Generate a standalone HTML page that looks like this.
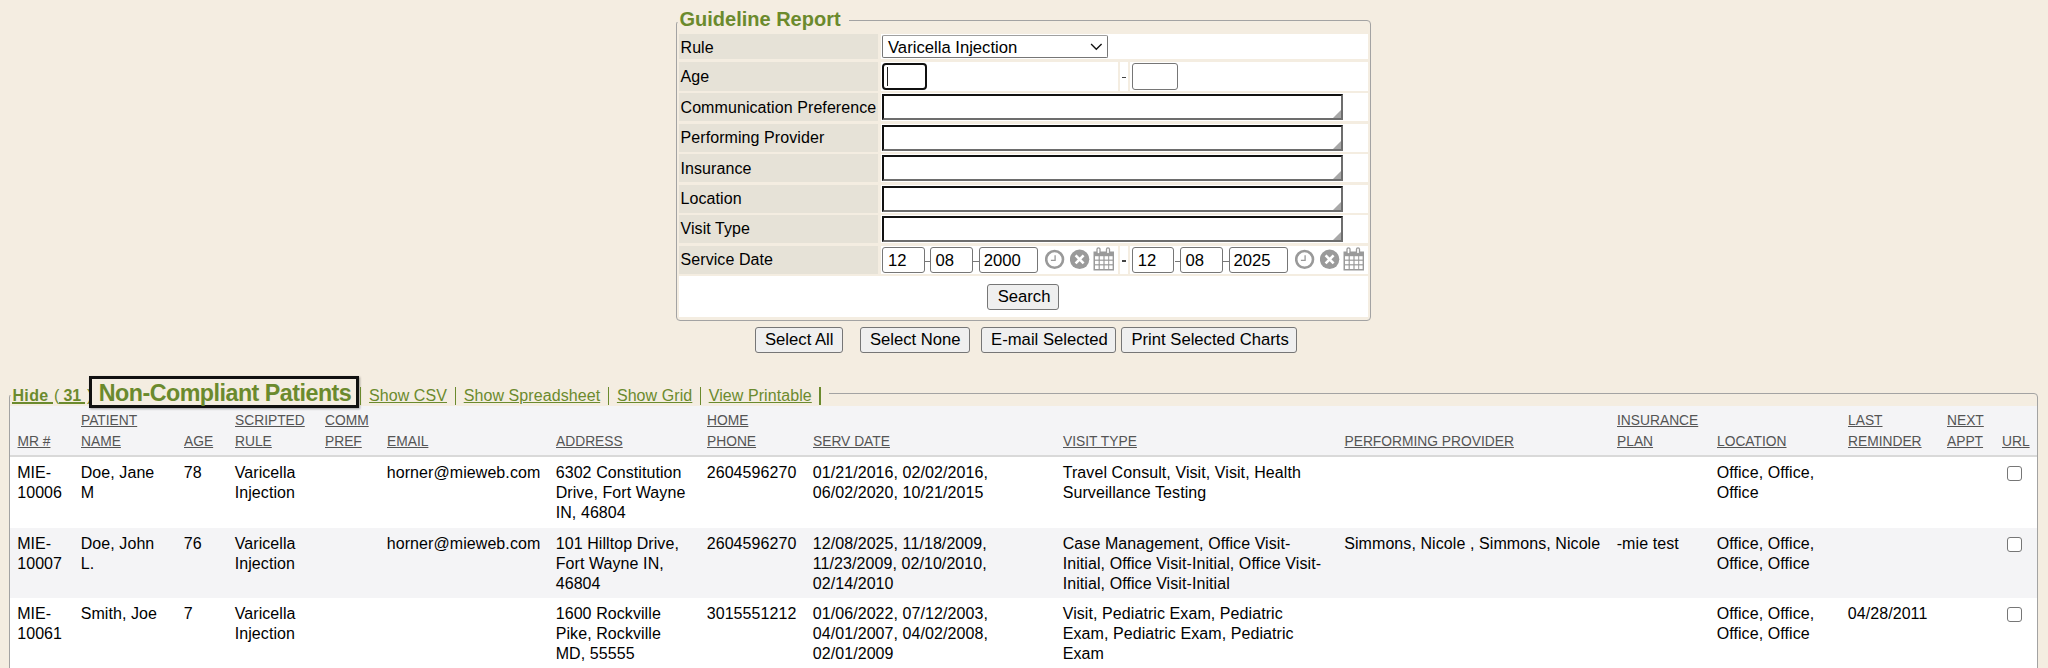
<!DOCTYPE html>
<html><head><meta charset="utf-8"><style>
html,body{margin:0;padding:0;}
body{width:2048px;height:668px;overflow:hidden;background:#f4ede1;position:relative;font-family:"Liberation Sans",sans-serif;}
.t{position:absolute;white-space:pre;font-family:"Liberation Sans",sans-serif;}
.u{text-decoration:underline;}
.r{position:absolute;}
.sel{border:1.3px solid #767676;border-top:1.6px solid #a0a0a0;border-radius:2px;background:#fff;box-sizing:border-box;}
.inp{border:1.3px solid #767676;border-radius:3px;background:#fff;box-sizing:border-box;}
.ta{border-style:solid;border-width:2.5px 2.5px 2.5px 2.5px;border-color:#111 #6d6d6d #6d6d6d #111;background:#fff;box-sizing:border-box;}
.btn{border:1.3px solid #767676;border-radius:3px;background:#efefef;box-sizing:border-box;}
.cb{width:14.6px;height:14.9px;border:1.4px solid #767676;border-radius:3px;background:#fff;box-sizing:border-box;}
</style></head><body>
<div class="r" style="left:676px;top:20px;width:695px;height:301px;border:1px solid #a3a3a3;border-radius:4px;box-sizing:border-box;"></div>
<div class="r" style="left:674px;top:15px;width:175px;height:7px;background:#f4ede1;"></div>
<div class="t " style="left:679.5px;top:7.300000000000001px;font-size:20px;line-height:24px;font-weight:bold;color:#6b8a2d;">Guideline Report</div>
<div class="r" style="left:679px;top:34px;width:199px;height:24.5px;background:#e6e2d7;"></div>
<div class="t " style="left:680.5px;top:37.7px;font-size:16px;line-height:20px;letter-spacing:0.08px;color:#000;">Rule</div>
<div class="r" style="left:679px;top:61.5px;width:199px;height:29px;background:#e6e2d7;"></div>
<div class="t " style="left:680.5px;top:66.7px;font-size:16px;line-height:20px;letter-spacing:0.08px;color:#000;">Age</div>
<div class="r" style="left:679px;top:93.3px;width:199px;height:28px;background:#e6e2d7;"></div>
<div class="t " style="left:680.5px;top:97.7px;font-size:16px;line-height:20px;letter-spacing:0.08px;color:#000;">Communication Preference</div>
<div class="r" style="left:679px;top:123.8px;width:199px;height:28px;background:#e6e2d7;"></div>
<div class="t " style="left:680.5px;top:128.2px;font-size:16px;line-height:20px;letter-spacing:0.08px;color:#000;">Performing Provider</div>
<div class="r" style="left:679px;top:154.3px;width:199px;height:28px;background:#e6e2d7;"></div>
<div class="t " style="left:680.5px;top:158.7px;font-size:16px;line-height:20px;letter-spacing:0.08px;color:#000;">Insurance</div>
<div class="r" style="left:679px;top:184.7px;width:199px;height:28.4px;background:#e6e2d7;"></div>
<div class="t " style="left:680.5px;top:189.0px;font-size:16px;line-height:20px;letter-spacing:0.08px;color:#000;">Location</div>
<div class="r" style="left:679px;top:215.3px;width:199px;height:27.9px;background:#e6e2d7;"></div>
<div class="t " style="left:680.5px;top:219.39999999999998px;font-size:16px;line-height:20px;letter-spacing:0.08px;color:#000;">Visit Type</div>
<div class="r" style="left:679px;top:245.8px;width:199px;height:28.2px;background:#e6e2d7;"></div>
<div class="t " style="left:680.5px;top:250.0px;font-size:16px;line-height:20px;letter-spacing:0.08px;color:#000;">Service Date</div>
<div class="r" style="left:880.5px;top:34px;width:487.5px;height:24.5px;background:#fff;"></div>
<div class="r" style="left:880.5px;top:61.5px;width:237.7px;height:29.2px;background:#fff;"></div>
<div class="r" style="left:1120px;top:61.5px;width:8px;height:29.2px;background:#fff;"></div>
<div class="r" style="left:1129.6px;top:61.5px;width:238.4px;height:29.2px;background:#fff;"></div>
<div class="r" style="left:880.5px;top:93.3px;width:487.5px;height:28px;background:#fff;"></div>
<div class="r" style="left:880.5px;top:123.8px;width:487.5px;height:28px;background:#fff;"></div>
<div class="r" style="left:880.5px;top:154.3px;width:487.5px;height:28px;background:#fff;"></div>
<div class="r" style="left:880.5px;top:184.7px;width:487.5px;height:28.4px;background:#fff;"></div>
<div class="r" style="left:880.5px;top:215.3px;width:487.5px;height:27.9px;background:#fff;"></div>
<div class="r" style="left:880.5px;top:245.8px;width:237.4px;height:28.2px;background:#fff;"></div>
<div class="r" style="left:1119.7px;top:245.8px;width:8px;height:28.2px;background:#fff;"></div>
<div class="r" style="left:1130px;top:245.8px;width:238px;height:28.2px;background:#fff;"></div>
<div class="r" style="left:679px;top:276.3px;width:689px;height:40.7px;background:#fff;"></div>
<div class="r sel" style="left:882px;top:35.4px;width:226px;height:22.4px;"></div>
<div class="t " style="left:888px;top:37.7px;font-size:16.67px;line-height:20px;color:#000;">Varicella Injection</div>
<svg class="r" style="left:1090px;top:43px" width="13" height="8" viewBox="0 0 13 8"><path d="M1.1 1.1 L6.3 6.3 L11.6 1.1" fill="none" stroke="#111" stroke-width="1.35"/></svg>
<div class="r" style="left:882px;top:63px;width:45.3px;height:26.5px;border:2.5px solid #101010;border-radius:4px;box-sizing:border-box;background:#fff"></div>
<div class="r" style="left:886.5px;top:66.5px;width:1.2px;height:19px;background:#222;"></div>
<div class="r inp" style="left:1132px;top:63.1px;width:45.5px;height:26.6px;"></div>
<div class="r" style="left:1121.9px;top:76.5px;width:4.4px;height:1.5px;background:#444;"></div>
<div class="r ta" style="left:881.5px;top:94.2px;width:461.5px;height:26px;"></div>
<svg class="r" style="left:1333px;top:110.2px" width="8" height="8" viewBox="0 0 8 8"><path d="M8 0 L8 8 L0 8 Z" fill="#a8a8a8"/></svg>
<div class="r ta" style="left:881.5px;top:124.7px;width:461.5px;height:26px;"></div>
<svg class="r" style="left:1333px;top:140.7px" width="8" height="8" viewBox="0 0 8 8"><path d="M8 0 L8 8 L0 8 Z" fill="#a8a8a8"/></svg>
<div class="r ta" style="left:881.5px;top:155.20000000000002px;width:461.5px;height:26px;"></div>
<svg class="r" style="left:1333px;top:171.20000000000002px" width="8" height="8" viewBox="0 0 8 8"><path d="M8 0 L8 8 L0 8 Z" fill="#a8a8a8"/></svg>
<div class="r ta" style="left:881.5px;top:185.6px;width:461.5px;height:26px;"></div>
<svg class="r" style="left:1333px;top:201.6px" width="8" height="8" viewBox="0 0 8 8"><path d="M8 0 L8 8 L0 8 Z" fill="#a8a8a8"/></svg>
<div class="r ta" style="left:881.5px;top:216.20000000000002px;width:461.5px;height:26px;"></div>
<svg class="r" style="left:1333px;top:232.20000000000002px" width="8" height="8" viewBox="0 0 8 8"><path d="M8 0 L8 8 L0 8 Z" fill="#a8a8a8"/></svg>
<div class="r inp" style="left:881.6px;top:247.3px;width:43.0px;height:25.9px;"></div>
<div class="t " style="left:887.9px;top:251px;font-size:16.67px;line-height:20px;color:#000;">12</div>
<div class="r inp" style="left:930.4px;top:247.3px;width:43.0px;height:25.9px;"></div>
<div class="t " style="left:935.6px;top:251px;font-size:16.67px;line-height:20px;color:#000;">08</div>
<div class="r inp" style="left:979px;top:247.3px;width:58.700000000000045px;height:25.9px;"></div>
<div class="t " style="left:983.7px;top:251px;font-size:16.67px;line-height:20px;color:#000;">2000</div>
<div class="r" style="left:924.6px;top:260.5px;width:6px;height:1.3px;background:#777;"></div>
<div class="r" style="left:973.4px;top:260.5px;width:6px;height:1.3px;background:#777;"></div>
<div class="r inp" style="left:1131.8px;top:247.3px;width:42.700000000000045px;height:25.9px;"></div>
<div class="t " style="left:1137.8px;top:251px;font-size:16.67px;line-height:20px;color:#000;">12</div>
<div class="r inp" style="left:1180px;top:247.3px;width:42.700000000000045px;height:25.9px;"></div>
<div class="t " style="left:1185.6px;top:251px;font-size:16.67px;line-height:20px;color:#000;">08</div>
<div class="r inp" style="left:1229px;top:247.3px;width:58.59999999999991px;height:25.9px;"></div>
<div class="t " style="left:1233.4px;top:251px;font-size:16.67px;line-height:20px;color:#000;">2025</div>
<div class="r" style="left:1174.5px;top:260.5px;width:6px;height:1.3px;background:#777;"></div>
<div class="r" style="left:1222.7px;top:260.5px;width:6px;height:1.3px;background:#777;"></div>
<div class="r" style="left:1122px;top:260.3px;width:4.3px;height:1.6px;background:#444;"></div>
<svg class="r" style="left:1045px;top:249px" width="20" height="21" viewBox="0 0 20 21"><circle cx="9.6" cy="10.4" r="8.4" fill="none" stroke="#999" stroke-width="2.6"/><path d="M10.1 6.2 V11.3 H5.9" fill="none" stroke="#999" stroke-width="1.3"/></svg>
<svg class="r" style="left:1069.8px;top:249px" width="20" height="21" viewBox="0 0 20 21"><circle cx="9.6" cy="10.3" r="9.7" fill="#9a9a9a"/><path d="M5.6 6.3 L13.6 14.3 M13.6 6.3 L5.6 14.3" stroke="#fff" stroke-width="2.6"/></svg>
<svg class="r" style="left:1093.4px;top:247px" width="22" height="24" viewBox="0 0 22 24"><rect x="0.5" y="4.5" width="20.5" height="19" fill="#9a9a9a"/><g fill="#fff"><rect x="2" y="9.2" width="3.6" height="3.4"/><rect x="6.8" y="9.2" width="3.6" height="3.4"/><rect x="11.6" y="9.2" width="3.6" height="3.4"/><rect x="16.2" y="9.2" width="3.4" height="3.4"/><rect x="2" y="13.8" width="3.6" height="3.4"/><rect x="6.8" y="13.8" width="3.6" height="3.4"/><rect x="11.6" y="13.8" width="3.6" height="3.4"/><rect x="16.2" y="13.8" width="3.4" height="3.4"/><rect x="2" y="18.4" width="3.6" height="3.6"/><rect x="6.8" y="18.4" width="3.6" height="3.6"/><rect x="11.6" y="18.4" width="3.6" height="3.6"/><rect x="16.2" y="18.4" width="3.4" height="3.6"/></g><rect x="4" y="0.8" width="3" height="6" rx="1.5" fill="#fff" stroke="#9a9a9a" stroke-width="1.3"/><rect x="13.5" y="0.8" width="3" height="6" rx="1.5" fill="#fff" stroke="#9a9a9a" stroke-width="1.3"/></svg>
<svg class="r" style="left:1294.8px;top:249px" width="20" height="21" viewBox="0 0 20 21"><circle cx="9.6" cy="10.4" r="8.4" fill="none" stroke="#999" stroke-width="2.6"/><path d="M10.1 6.2 V11.3 H5.9" fill="none" stroke="#999" stroke-width="1.3"/></svg>
<svg class="r" style="left:1319.6px;top:249px" width="20" height="21" viewBox="0 0 20 21"><circle cx="9.6" cy="10.3" r="9.7" fill="#9a9a9a"/><path d="M5.6 6.3 L13.6 14.3 M13.6 6.3 L5.6 14.3" stroke="#fff" stroke-width="2.6"/></svg>
<svg class="r" style="left:1343.2px;top:247px" width="22" height="24" viewBox="0 0 22 24"><rect x="0.5" y="4.5" width="20.5" height="19" fill="#9a9a9a"/><g fill="#fff"><rect x="2" y="9.2" width="3.6" height="3.4"/><rect x="6.8" y="9.2" width="3.6" height="3.4"/><rect x="11.6" y="9.2" width="3.6" height="3.4"/><rect x="16.2" y="9.2" width="3.4" height="3.4"/><rect x="2" y="13.8" width="3.6" height="3.4"/><rect x="6.8" y="13.8" width="3.6" height="3.4"/><rect x="11.6" y="13.8" width="3.6" height="3.4"/><rect x="16.2" y="13.8" width="3.4" height="3.4"/><rect x="2" y="18.4" width="3.6" height="3.6"/><rect x="6.8" y="18.4" width="3.6" height="3.6"/><rect x="11.6" y="18.4" width="3.6" height="3.6"/><rect x="16.2" y="18.4" width="3.4" height="3.6"/></g><rect x="4" y="0.8" width="3" height="6" rx="1.5" fill="#fff" stroke="#9a9a9a" stroke-width="1.3"/><rect x="13.5" y="0.8" width="3" height="6" rx="1.5" fill="#fff" stroke="#9a9a9a" stroke-width="1.3"/></svg>
<div class="r btn" style="left:987.4px;top:284.1px;width:71.6px;height:25.6px;"></div>
<div class="t " style="left:997.7px;top:287px;font-size:16.67px;line-height:20px;color:#000;">Search</div>
<div class="r btn" style="left:755.3px;top:327px;width:87.60000000000002px;height:25.5px;"></div>
<div class="t " style="left:765.0px;top:330.3px;font-size:16.67px;line-height:20px;color:#000;">Select All</div>
<div class="r btn" style="left:860.4px;top:327px;width:109.30000000000007px;height:25.5px;"></div>
<div class="t " style="left:869.9px;top:330.3px;font-size:16.67px;line-height:20px;color:#000;">Select None</div>
<div class="r btn" style="left:981.3px;top:327px;width:134.79999999999995px;height:25.5px;"></div>
<div class="t " style="left:991.1px;top:330.3px;font-size:16.67px;line-height:20px;color:#000;">E-mail Selected</div>
<div class="r btn" style="left:1121.4px;top:327px;width:176.0px;height:25.5px;"></div>
<div class="t " style="left:1131.4px;top:330.3px;font-size:16.67px;line-height:20px;color:#000;">Print Selected Charts</div>
<div class="r" style="left:9px;top:393px;width:2029px;height:400px;border:1px solid #a3a3a3;border-radius:4px;box-sizing:border-box;"></div>
<div class="r" style="left:8px;top:385px;width:821px;height:9.6px;background:#f4ede1;"></div>
<div class="r" style="left:10px;top:406px;width:2026.5px;height:48.7px;background:#f4f4f6;"></div>
<div class="r" style="left:10px;top:454.7px;width:2026.5px;height:2px;background:#d9d9d9;"></div>
<div class="t u" style="left:17.5px;top:432px;font-size:13.8px;line-height:20px;color:#555;">MR #</div>
<div class="t u" style="left:81px;top:411px;font-size:13.8px;line-height:20px;color:#555;">PATIENT</div>
<div class="t u" style="left:81px;top:432px;font-size:13.8px;line-height:20px;color:#555;">NAME</div>
<div class="t u" style="left:184px;top:432px;font-size:13.8px;line-height:20px;color:#555;">AGE</div>
<div class="t u" style="left:235px;top:411px;font-size:13.8px;line-height:20px;color:#555;">SCRIPTED</div>
<div class="t u" style="left:235px;top:432px;font-size:13.8px;line-height:20px;color:#555;">RULE</div>
<div class="t u" style="left:325px;top:411px;font-size:13.8px;line-height:20px;color:#555;">COMM</div>
<div class="t u" style="left:325px;top:432px;font-size:13.8px;line-height:20px;color:#555;">PREF</div>
<div class="t u" style="left:387px;top:432px;font-size:13.8px;line-height:20px;color:#555;">EMAIL</div>
<div class="t u" style="left:556px;top:432px;font-size:13.8px;line-height:20px;color:#555;">ADDRESS</div>
<div class="t u" style="left:707px;top:411px;font-size:13.8px;line-height:20px;color:#555;">HOME</div>
<div class="t u" style="left:707px;top:432px;font-size:13.8px;line-height:20px;color:#555;">PHONE</div>
<div class="t u" style="left:813px;top:432px;font-size:13.8px;line-height:20px;color:#555;">SERV DATE</div>
<div class="t u" style="left:1063px;top:432px;font-size:13.8px;line-height:20px;color:#555;">VISIT TYPE</div>
<div class="t u" style="left:1344.5px;top:432px;font-size:13.8px;line-height:20px;color:#555;">PERFORMING PROVIDER</div>
<div class="t u" style="left:1617px;top:411px;font-size:13.8px;line-height:20px;color:#555;">INSURANCE</div>
<div class="t u" style="left:1617px;top:432px;font-size:13.8px;line-height:20px;color:#555;">PLAN</div>
<div class="t u" style="left:1717px;top:432px;font-size:13.8px;line-height:20px;color:#555;">LOCATION</div>
<div class="t u" style="left:1848px;top:411px;font-size:13.8px;line-height:20px;color:#555;">LAST</div>
<div class="t u" style="left:1848px;top:432px;font-size:13.8px;line-height:20px;color:#555;">REMINDER</div>
<div class="t u" style="left:1947px;top:411px;font-size:13.8px;line-height:20px;color:#555;">NEXT</div>
<div class="t u" style="left:1947px;top:432px;font-size:13.8px;line-height:20px;color:#555;">APPT</div>
<div class="t u" style="left:2002px;top:432px;font-size:13.8px;line-height:20px;color:#555;">URL</div>
<div class="t " style="left:12.4px;top:386px;font-size:16px;line-height:20px;font-weight:bold;letter-spacing:0.4px;color:#6b8a2d;">Hide</div>
<div class="r" style="left:12px;top:402px;width:41px;height:1.7px;background:#6b8a2d;"></div>
<div class="t " style="left:54px;top:386px;font-size:16px;line-height:20px;color:#6b8a2d;">(</div>
<div class="t " style="left:63.6px;top:386px;font-size:16px;line-height:20px;font-weight:bold;letter-spacing:-0.3px;color:#6b8a2d;">31</div>
<div class="r" style="left:59.2px;top:402px;width:25.8px;height:1.7px;background:#6b8a2d;"></div>
<div class="t " style="left:87px;top:386px;font-size:16px;line-height:20px;color:#6b8a2d;">)</div>
<div class="r" style="left:89px;top:376px;width:270px;height:31.8px;border:3px solid #111;box-sizing:border-box;box-shadow:1px 1px 2px rgba(0,0,0,.35)"></div>
<div class="t " style="left:98.7px;top:380.4px;font-size:23.3px;line-height:26px;font-weight:bold;letter-spacing:-0.52px;color:#6b8a2d;">Non-Compliant Patients</div>
<div class="r" style="left:359.59999999999997px;top:386.5px;width:1.2px;height:18px;background:#6b8a2d;"></div>
<div class="r" style="left:454.9px;top:386.5px;width:1.2px;height:18px;background:#6b8a2d;"></div>
<div class="r" style="left:608.1px;top:386.5px;width:1.2px;height:18px;background:#6b8a2d;"></div>
<div class="r" style="left:700.1px;top:386.5px;width:1.2px;height:18px;background:#6b8a2d;"></div>
<div class="r" style="left:819.4px;top:386.5px;width:1.2px;height:18px;background:#6b8a2d;"></div>
<div class="t " style="left:369.0px;top:386px;font-size:16px;line-height:20px;letter-spacing:0.08px;color:#6b8a2d;text-decoration:underline;">Show CSV</div>
<div class="t " style="left:463.7px;top:386px;font-size:16px;line-height:20px;letter-spacing:0.08px;color:#6b8a2d;text-decoration:underline;">Show Spreadsheet</div>
<div class="t " style="left:616.9px;top:386px;font-size:16px;line-height:20px;letter-spacing:0.08px;color:#6b8a2d;text-decoration:underline;">Show Grid</div>
<div class="t " style="left:708.6999999999999px;top:386px;font-size:16px;line-height:20px;letter-spacing:0.08px;color:#6b8a2d;text-decoration:underline;">View Printable</div>
<div class="r" style="left:10px;top:456.7px;width:2026.5px;height:71.1px;background:#fff;"></div>
<div class="r" style="left:10px;top:527.8px;width:2026.5px;height:69.8px;background:#f4f4f6;"></div>
<div class="r" style="left:10px;top:597.6px;width:2026.5px;height:80px;background:#fff;"></div>
<div class="t " style="left:17.2px;top:462.5px;font-size:16px;line-height:20px;letter-spacing:0.08px;color:#000;">MIE-</div>
<div class="t " style="left:17.2px;top:482.5px;font-size:16px;line-height:20px;letter-spacing:0.08px;color:#000;">10006</div>
<div class="t " style="left:80.7px;top:462.5px;font-size:16px;line-height:20px;letter-spacing:0.08px;color:#000;">Doe, Jane</div>
<div class="t " style="left:80.7px;top:482.5px;font-size:16px;line-height:20px;letter-spacing:0.08px;color:#000;">M</div>
<div class="t " style="left:183.7px;top:462.5px;font-size:16px;line-height:20px;letter-spacing:0.08px;color:#000;">78</div>
<div class="t " style="left:234.7px;top:462.5px;font-size:16px;line-height:20px;letter-spacing:0.08px;color:#000;">Varicella</div>
<div class="t " style="left:234.7px;top:482.5px;font-size:16px;line-height:20px;letter-spacing:0.08px;color:#000;">Injection</div>
<div class="t " style="left:386.7px;top:462.5px;font-size:16px;line-height:20px;letter-spacing:0.08px;color:#000;">horner@mieweb.com</div>
<div class="t " style="left:555.7px;top:462.5px;font-size:16px;line-height:20px;letter-spacing:0.08px;color:#000;">6302 Constitution</div>
<div class="t " style="left:555.7px;top:482.5px;font-size:16px;line-height:20px;letter-spacing:0.08px;color:#000;">Drive, Fort Wayne</div>
<div class="t " style="left:555.7px;top:502.5px;font-size:16px;line-height:20px;letter-spacing:0.08px;color:#000;">IN, 46804</div>
<div class="t " style="left:706.7px;top:462.5px;font-size:16px;line-height:20px;letter-spacing:0.08px;color:#000;">2604596270</div>
<div class="t " style="left:812.7px;top:462.5px;font-size:16px;line-height:20px;letter-spacing:0.08px;color:#000;">01/21/2016, 02/02/2016,</div>
<div class="t " style="left:812.7px;top:482.5px;font-size:16px;line-height:20px;letter-spacing:0.08px;color:#000;">06/02/2020, 10/21/2015</div>
<div class="t " style="left:1062.7px;top:462.5px;font-size:16px;line-height:20px;letter-spacing:0.08px;color:#000;">Travel Consult, Visit, Visit, Health</div>
<div class="t " style="left:1062.7px;top:482.5px;font-size:16px;line-height:20px;letter-spacing:0.08px;color:#000;">Surveillance Testing</div>
<div class="t " style="left:1716.7px;top:462.5px;font-size:16px;line-height:20px;letter-spacing:0.08px;color:#000;">Office, Office,</div>
<div class="t " style="left:1716.7px;top:482.5px;font-size:16px;line-height:20px;letter-spacing:0.08px;color:#000;">Office</div>
<div class="t " style="left:17.2px;top:533.5px;font-size:16px;line-height:20px;letter-spacing:0.08px;color:#000;">MIE-</div>
<div class="t " style="left:17.2px;top:553.5px;font-size:16px;line-height:20px;letter-spacing:0.08px;color:#000;">10007</div>
<div class="t " style="left:80.7px;top:533.5px;font-size:16px;line-height:20px;letter-spacing:0.08px;color:#000;">Doe, John</div>
<div class="t " style="left:80.7px;top:553.5px;font-size:16px;line-height:20px;letter-spacing:0.08px;color:#000;">L.</div>
<div class="t " style="left:183.7px;top:533.5px;font-size:16px;line-height:20px;letter-spacing:0.08px;color:#000;">76</div>
<div class="t " style="left:234.7px;top:533.5px;font-size:16px;line-height:20px;letter-spacing:0.08px;color:#000;">Varicella</div>
<div class="t " style="left:234.7px;top:553.5px;font-size:16px;line-height:20px;letter-spacing:0.08px;color:#000;">Injection</div>
<div class="t " style="left:386.7px;top:533.5px;font-size:16px;line-height:20px;letter-spacing:0.08px;color:#000;">horner@mieweb.com</div>
<div class="t " style="left:555.7px;top:533.5px;font-size:16px;line-height:20px;letter-spacing:0.08px;color:#000;">101 Hilltop Drive,</div>
<div class="t " style="left:555.7px;top:553.5px;font-size:16px;line-height:20px;letter-spacing:0.08px;color:#000;">Fort Wayne IN,</div>
<div class="t " style="left:555.7px;top:573.5px;font-size:16px;line-height:20px;letter-spacing:0.08px;color:#000;">46804</div>
<div class="t " style="left:706.7px;top:533.5px;font-size:16px;line-height:20px;letter-spacing:0.08px;color:#000;">2604596270</div>
<div class="t " style="left:812.7px;top:533.5px;font-size:16px;line-height:20px;letter-spacing:0.08px;color:#000;">12/08/2025, 11/18/2009,</div>
<div class="t " style="left:812.7px;top:553.5px;font-size:16px;line-height:20px;letter-spacing:0.08px;color:#000;">11/23/2009, 02/10/2010,</div>
<div class="t " style="left:812.7px;top:573.5px;font-size:16px;line-height:20px;letter-spacing:0.08px;color:#000;">02/14/2010</div>
<div class="t " style="left:1062.7px;top:533.5px;font-size:16px;line-height:20px;letter-spacing:0.08px;color:#000;">Case Management, Office Visit-</div>
<div class="t " style="left:1062.7px;top:553.5px;font-size:16px;line-height:20px;letter-spacing:0.08px;color:#000;">Initial, Office Visit-Initial, Office Visit-</div>
<div class="t " style="left:1062.7px;top:573.5px;font-size:16px;line-height:20px;letter-spacing:0.08px;color:#000;">Initial, Office Visit-Initial</div>
<div class="t " style="left:1344.2px;top:533.5px;font-size:16px;line-height:20px;letter-spacing:0.08px;color:#000;">Simmons, Nicole , Simmons, Nicole</div>
<div class="t " style="left:1616.7px;top:533.5px;font-size:16px;line-height:20px;letter-spacing:0.08px;color:#000;">-mie test</div>
<div class="t " style="left:1716.7px;top:533.5px;font-size:16px;line-height:20px;letter-spacing:0.08px;color:#000;">Office, Office,</div>
<div class="t " style="left:1716.7px;top:553.5px;font-size:16px;line-height:20px;letter-spacing:0.08px;color:#000;">Office, Office</div>
<div class="t " style="left:17.2px;top:603.5px;font-size:16px;line-height:20px;letter-spacing:0.08px;color:#000;">MIE-</div>
<div class="t " style="left:17.2px;top:623.5px;font-size:16px;line-height:20px;letter-spacing:0.08px;color:#000;">10061</div>
<div class="t " style="left:80.7px;top:603.5px;font-size:16px;line-height:20px;letter-spacing:0.08px;color:#000;">Smith, Joe</div>
<div class="t " style="left:183.7px;top:603.5px;font-size:16px;line-height:20px;letter-spacing:0.08px;color:#000;">7</div>
<div class="t " style="left:234.7px;top:603.5px;font-size:16px;line-height:20px;letter-spacing:0.08px;color:#000;">Varicella</div>
<div class="t " style="left:234.7px;top:623.5px;font-size:16px;line-height:20px;letter-spacing:0.08px;color:#000;">Injection</div>
<div class="t " style="left:555.7px;top:603.5px;font-size:16px;line-height:20px;letter-spacing:0.08px;color:#000;">1600 Rockville</div>
<div class="t " style="left:555.7px;top:623.5px;font-size:16px;line-height:20px;letter-spacing:0.08px;color:#000;">Pike, Rockville</div>
<div class="t " style="left:555.7px;top:643.5px;font-size:16px;line-height:20px;letter-spacing:0.08px;color:#000;">MD, 55555</div>
<div class="t " style="left:706.7px;top:603.5px;font-size:16px;line-height:20px;letter-spacing:0.08px;color:#000;">3015551212</div>
<div class="t " style="left:812.7px;top:603.5px;font-size:16px;line-height:20px;letter-spacing:0.08px;color:#000;">01/06/2022, 07/12/2003,</div>
<div class="t " style="left:812.7px;top:623.5px;font-size:16px;line-height:20px;letter-spacing:0.08px;color:#000;">04/01/2007, 04/02/2008,</div>
<div class="t " style="left:812.7px;top:643.5px;font-size:16px;line-height:20px;letter-spacing:0.08px;color:#000;">02/01/2009</div>
<div class="t " style="left:1062.7px;top:603.5px;font-size:16px;line-height:20px;letter-spacing:0.08px;color:#000;">Visit, Pediatric Exam, Pediatric</div>
<div class="t " style="left:1062.7px;top:623.5px;font-size:16px;line-height:20px;letter-spacing:0.08px;color:#000;">Exam, Pediatric Exam, Pediatric</div>
<div class="t " style="left:1062.7px;top:643.5px;font-size:16px;line-height:20px;letter-spacing:0.08px;color:#000;">Exam</div>
<div class="t " style="left:1716.7px;top:603.5px;font-size:16px;line-height:20px;letter-spacing:0.08px;color:#000;">Office, Office,</div>
<div class="t " style="left:1716.7px;top:623.5px;font-size:16px;line-height:20px;letter-spacing:0.08px;color:#000;">Office, Office</div>
<div class="t " style="left:1847.7px;top:603.5px;font-size:16px;line-height:20px;letter-spacing:0.08px;color:#000;">04/28/2011</div>
<div class="r cb" style="left:2007.1px;top:465.9px;"></div>
<div class="r cb" style="left:2007.1px;top:537.3px;"></div>
<div class="r cb" style="left:2007.1px;top:607.3px;"></div>
</body></html>
